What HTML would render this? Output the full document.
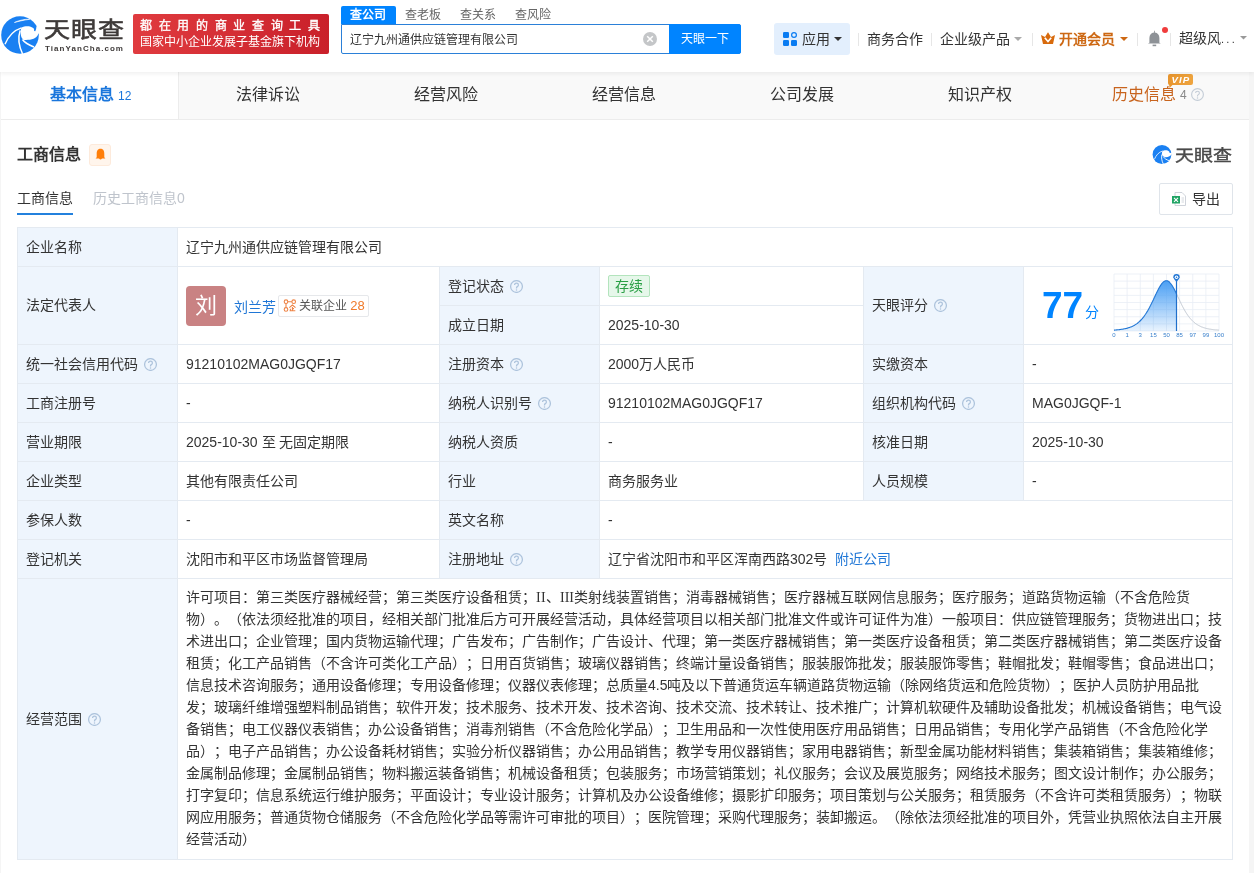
<!DOCTYPE html>
<html lang="zh-CN"><head><meta charset="utf-8">
<style>
*{box-sizing:border-box;margin:0;padding:0}
html,body{width:1254px;height:873px;overflow:hidden}
body{will-change:transform;text-spacing-trim:space-all;background:#f5f5f5;font-family:"Liberation Sans",sans-serif;color:#333;font-size:14px;position:relative}
.abs{position:absolute}
.nw{white-space:nowrap}
#hdr{position:absolute;left:0;top:0;width:1254px;height:72px;background:#fff;z-index:2;box-shadow:0 2px 4px rgba(0,0,0,.06)}
#card{position:absolute;left:1px;top:72px;width:1248px;height:801px;background:#fff}
#tabs{position:absolute;left:0;top:0;width:1248px;height:48px;background:#f9f9f9;border-bottom:1px solid #ececec}
.tab{position:absolute;top:0;height:47px;line-height:46px;text-align:center;font-size:16px;color:#333}
.q{display:inline-block;vertical-align:middle;margin-left:6px;position:relative;top:-1px}
</style></head><body>
<div id="hdr">
  <!-- logo -->
  <svg class="abs" style="left:0px;top:14px" width="42" height="42" viewBox="0 0 42 42">
    <circle cx="20" cy="21" r="18.8" fill="#1a80f2"/>
    <path d="M21.5 13.5 C25 11.8 30.5 11.6 33.6 14.3 C34.2 15.2 34.3 16.2 34.1 17.1 L35.2 17.3 C36 16 36.3 14.5 36.4 12.5 L42 12.5 L42 19.5 L38.5 19.5 C37.5 22.3 35.5 24 33.6 24.8 C31 25.8 27 26.1 24.2 25.9 C22 25.6 20.7 22 20.7 19 C20.7 16.5 21 14.5 21.5 13.5 Z" fill="#fff"/>
    <path d="M5 30.2 C8 23 13 16.5 21.5 13.8" fill="none" stroke="#fff" stroke-width="1.4"/>
    <path d="M20.2 16.5 C18.3 22 18.4 31 22.6 40" fill="none" stroke="#fff" stroke-width="1.5"/>
    <path d="M22.5 25.5 C24.5 28.5 28 30.8 34 33" fill="none" stroke="#fff" stroke-width="1.5"/>
    <path d="M14.4 8.5 C19 6.3 24.5 5 29.8 5.3 C24.5 6 19 7.2 14.4 8.5 Z" fill="#fff" stroke="#fff" stroke-width="0.6"/>
  </svg>
  <div class="abs nw" style="left:44px;top:13px;font-size:26px;line-height:32px;color:#3e3a39;font-weight:500;-webkit-text-stroke:0.7px #3e3a39;letter-spacing:1px;transform:scaleY(0.82);transform-origin:0 20px">天眼查</div>
  <div class="abs nw" style="left:45px;top:44px;font-size:8px;line-height:10px;color:#3e3a39;font-weight:bold;letter-spacing:1.05px">TianYanCha.com</div>
  <!-- red banner -->
  <div class="abs" style="left:133px;top:14px;width:196px;height:40px;background:linear-gradient(90deg,#e03b3f,#c9202a);border-radius:2px"></div>
  <div class="abs nw" style="left:140px;top:18px;font-size:12px;line-height:16px;color:#fff;letter-spacing:6.65px;font-weight:500;-webkit-text-stroke:0.35px #fff">都在用的商业查询工具</div>
  <div class="abs nw" style="left:140px;top:34px;font-size:12px;line-height:16px;color:#fff">国家中小企业发展子基金旗下机构</div>
  <!-- search tabs -->
  <div class="abs" style="left:341px;top:6px;width:55px;height:18px;background:#0084ff;border-radius:2px 2px 0 0"></div>
  <div class="abs nw" style="left:350px;top:6px;font-size:12px;line-height:18px;color:#fff;font-weight:bold">查公司</div>
  <div class="abs nw" style="left:405px;top:6px;font-size:12px;line-height:18px;color:#666">查老板</div>
  <div class="abs nw" style="left:460px;top:6px;font-size:12px;line-height:18px;color:#666">查关系</div>
  <div class="abs nw" style="left:515px;top:6px;font-size:12px;line-height:18px;color:#666">查风险</div>
  <div class="abs" style="left:341px;top:24px;width:400px;height:30px;border:1px solid #2b80d8;border-radius:0 2px 2px 2px;background:#fff"></div>
  <div class="abs nw" style="left:350px;top:31px;font-size:12px;line-height:18px;color:#333">辽宁九州通供应链管理有限公司</div>
  <div class="abs" style="left:643px;top:32px;width:14px;height:14px;border-radius:50%;background:#c4c6c8"></div>
  <svg class="abs" style="left:643px;top:32px" width="14" height="14"><path d="M4.2 4.2 L9.8 9.8 M9.8 4.2 L4.2 9.8" stroke="#fff" stroke-width="1.5"/></svg>
  <div class="abs" style="left:669px;top:24px;width:72px;height:30px;background:#0084ff;border-radius:0 3px 3px 0"></div>
  <div class="abs nw" style="left:681px;top:29px;font-size:12px;line-height:20px;color:#fff">天眼一下</div>
  <!-- right nav -->
  <div class="abs" style="left:774px;top:23px;width:76px;height:32px;background:#e3effd;border-radius:3px"></div>
  <svg class="abs" style="left:783px;top:32px" width="14" height="14" viewBox="0 0 14 14">
    <rect x="0" y="0" width="6" height="6" rx="1.3" fill="#0a7cf2"/>
    <circle cx="11" cy="3" r="2.4" fill="none" stroke="#0a7cf2" stroke-width="1.2"/>
    <rect x="0" y="8" width="6" height="6" rx="1.3" fill="#0a7cf2"/>
    <rect x="8" y="8" width="6" height="6" rx="1.3" fill="#0a7cf2"/>
  </svg>
  <div class="abs nw" style="left:802px;top:29px;font-size:14px;line-height:20px;color:#333">应用</div>
  <svg class="abs" style="left:834px;top:37px" width="8" height="5"><path d="M0 0 L8 0 L4 4 Z" fill="#333"/></svg>
  <div class="abs" style="left:858px;top:33px;width:1px;height:13px;background:#e6e6e6"></div>
  <div class="abs nw" style="left:867px;top:29px;font-size:14px;line-height:20px;color:#333">商务合作</div>
  <div class="abs" style="left:931px;top:33px;width:1px;height:13px;background:#e6e6e6"></div>
  <div class="abs nw" style="left:940px;top:29px;font-size:14px;line-height:20px;color:#333">企业级产品</div>
  <svg class="abs" style="left:1014px;top:37px" width="8" height="5"><path d="M0 0 L8 0 L4 4 Z" fill="#aaa"/></svg>
  <div class="abs" style="left:1032px;top:33px;width:1px;height:13px;background:#e6e6e6"></div>
  <svg class="abs" style="left:1041px;top:32px" width="14" height="12" viewBox="0 0 14 12">
    <path d="M0 3 L4 5 L7 0.3 L10 5 L14 3 L12 12 L2 12 Z" fill="#d86a0c"/>
    <path d="M3.8 5.8 L7 9.5 L10.2 5.8" fill="none" stroke="#fff" stroke-width="1.6"/>
  </svg>
  <div class="abs nw" style="left:1059px;top:29px;font-size:14px;line-height:20px;color:#cd6813;font-weight:bold">开通会员</div>
  <svg class="abs" style="left:1120px;top:37px" width="8" height="5"><path d="M0 0 L8 0 L4 4 Z" fill="#cd6813"/></svg>
  <div class="abs" style="left:1137px;top:33px;width:1px;height:13px;background:#e6e6e6"></div>
  <svg class="abs" style="left:1147px;top:30px" width="15" height="17" viewBox="0 0 15 17">
    <path d="M7 0.8 L7.8 0.8 L7.8 2.5 Q12.2 3 12.4 8 L12.4 12.8 L13.8 13.5 L0.9 13.5 L2.4 12.8 L2.4 8 Q2.6 3 7 2.5 Z" fill="#8e9297"/>
    <rect x="5.6" y="14.6" width="3.6" height="1.6" fill="#8e9297"/>
  </svg>
  <div class="abs" style="left:1162px;top:27px;width:6px;height:6px;border-radius:50%;background:#f03c3c"></div>
  <div class="abs" style="left:1170px;top:33px;width:1px;height:13px;background:#e6e6e6"></div>
  <div class="abs nw" style="left:1179px;top:28px;font-size:14px;line-height:20px;color:#333">超级风<span style="font-size:11px;letter-spacing:2.3px">...</span></div>
  <svg class="abs" style="left:1240px;top:36px" width="7" height="4"><path d="M0 0 L7 0 L3.5 3.5 Z" fill="#999"/></svg>
</div>
<div id="card">
  <div id="tabs">
    <div class="tab" style="left:0;width:178px;padding-left:2px;background:#fff;border-right:1px solid #ececec;height:47px"><b style="color:#1a76dc">基本信息</b> <span style="font-size:12px;color:#1a76dc">12</span></div>
    <div class="tab" style="left:178px;width:178px">法律诉讼</div>
    <div class="tab" style="left:356px;width:178px">经营风险</div>
    <div class="tab" style="left:534px;width:178px">经营信息</div>
    <div class="tab" style="left:712px;width:178px">公司发展</div>
    <div class="tab" style="left:890px;width:178px">知识产权</div>
    <div class="abs nw" style="left:1111px;top:12px;font-size:16px;line-height:22px;color:#c8641e">历史信息</div>
    <div class="abs nw" style="left:1179px;top:13px;font-size:12px;line-height:20px;color:#888">4</div>
    <svg class="abs" style="left:1190px;top:16px" width="13" height="13" viewBox="0 0 13 13"><circle cx="6.5" cy="6.5" r="5.9" fill="none" stroke="#c3ccd6" stroke-width="1.1"/><path d="M4.6 5.1 Q4.6 3.2 6.5 3.2 Q8.4 3.2 8.4 4.9 Q8.4 6 7.3 6.6 Q6.5 7.1 6.5 8.1 L6.5 8.4" fill="none" stroke="#c3ccd6" stroke-width="1.1"/><circle cx="6.5" cy="9.9" r="0.75" fill="#c3ccd6"/></svg>
    <svg class="abs" style="left:1167px;top:2px" width="25" height="14" viewBox="0 0 25 14"><defs><linearGradient id="vg" x1="0" y1="0" x2="1" y2="0"><stop offset="0" stop-color="#e8952e"/><stop offset="1" stop-color="#eea43f"/></linearGradient></defs><path d="M2 0 L23 0 Q25 0 25 2 L25 9 Q25 11 23 11 L4.5 11 L1.5 14 L1.2 11 Q0 10.5 0 9 L0 2 Q0 0 2 0 Z" fill="url(#vg)"/><text x="12.8" y="9" text-anchor="middle" font-family="Liberation Sans" font-size="9.6" font-weight="bold" font-style="italic" letter-spacing="1" fill="#fff">VIP</text></svg>
  </div>
</div>
<!-- section header -->
<div class="abs nw" style="left:17px;top:144px;font-size:16px;line-height:22px;font-weight:bold;color:#333">工商信息</div>
<div class="abs" style="left:89px;top:144px;width:22px;height:22px;background:#fff5ec;border:1px solid #fdeadb;border-radius:3px"></div>
<svg class="abs" style="left:94px;top:148px" width="12" height="14" viewBox="0 0 12 14">
  <path d="M6.5 0.8 C9.4 0.8 10.3 3 10.3 6 L10.3 9.2 L11.4 10.6 L8 10.6 Q6.5 12.4 5 10.6 L1.6 10.6 L2.7 9.2 L2.7 6 C2.7 3 3.6 0.8 6.5 0.8 Z" fill="#ff7f0a"/>
</svg>
<div class="abs nw" style="left:17px;top:187px;font-size:14px;line-height:22px;color:#333">工商信息</div>
<div class="abs" style="left:17px;top:213px;width:56px;height:2px;background:#2381dd"></div>
<div class="abs nw" style="left:93px;top:187px;font-size:14px;line-height:22px;color:#bfc4cc">历史工商信息0</div>
<!-- small logo -->
<svg class="abs" style="left:1152px;top:144px" width="21" height="21" viewBox="0 0 42 42">
  <circle cx="20" cy="21" r="18.8" fill="#1a80f2"/>
  <path d="M21 14.4 C24 11.8 31 11.4 34.3 15.2 L35 17.6 L40 18.6 L40 20 C37.5 23.8 32 26.6 27 26.3 C22.8 26 19.8 23.2 19.8 20 C19.8 17.4 20.3 15.4 21 14.4 Z" fill="#fff"/>
  <path d="M5 30.2 C8 23 13 16.5 21.5 13.8" fill="none" stroke="#fff" stroke-width="1.6"/>
  <path d="M19.6 21 C18.4 27 19.6 34 22.6 40" fill="none" stroke="#fff" stroke-width="1.8"/>
  <path d="M22.3 25.2 C25 29 29 31.8 34 33.2" fill="none" stroke="#fff" stroke-width="1.8"/>
</svg>
<div class="abs nw" style="left:1175px;top:144px;font-size:19px;line-height:24px;color:#4a4a4a;font-weight:500;-webkit-text-stroke:0.5px #4a4a4a;transform:scaleY(0.82);transform-origin:0 14px">天眼查</div>
<!-- export -->
<div class="abs" style="left:1159px;top:183px;width:74px;height:32px;border:1px solid #dfe4ea;border-radius:2px;background:#fff"></div>
<svg class="abs" style="left:1172px;top:192px" width="14" height="14" viewBox="0 0 14 14">
  <path d="M3 0.5 L10 0.5 L13.5 4 L13.5 13.5 L3 13.5 Z" fill="#fff" stroke="#c9ced6" stroke-width="0.9"/>
  <path d="M9.5 6 L12 6 M9.5 8 L12 8 M9.5 10 L12 10" stroke="#c9ced6" stroke-width="0.8"/>
  <rect x="0" y="4" width="8" height="7.5" fill="#21a464"/>
  <path d="M2 5.8 L6 9.8 M6 5.8 L2 9.8" stroke="#fff" stroke-width="1.1"/>
</svg>
<div class="abs nw" style="left:1192px;top:188px;font-size:14px;line-height:22px;color:#333">导出</div>
<div class="abs" style="left:18px;top:228px;width:159px;height:631px;background:#eef5fd"></div>
<div class="abs" style="left:440px;top:267px;width:159px;height:311px;background:#eef5fd"></div>
<div class="abs" style="left:864px;top:267px;width:159px;height:233px;background:#eef5fd"></div>
<div class="abs" style="left:17px;top:227px;width:1216px;height:1px;background:#e4eaf1"></div>
<div class="abs" style="left:17px;top:266px;width:1216px;height:1px;background:#e4eaf1"></div>
<div class="abs" style="left:439px;top:305px;width:425px;height:1px;background:#e4eaf1"></div>
<div class="abs" style="left:17px;top:344px;width:1216px;height:1px;background:#e4eaf1"></div>
<div class="abs" style="left:17px;top:383px;width:1216px;height:1px;background:#e4eaf1"></div>
<div class="abs" style="left:17px;top:422px;width:1216px;height:1px;background:#e4eaf1"></div>
<div class="abs" style="left:17px;top:461px;width:1216px;height:1px;background:#e4eaf1"></div>
<div class="abs" style="left:17px;top:500px;width:1216px;height:1px;background:#e4eaf1"></div>
<div class="abs" style="left:17px;top:539px;width:1216px;height:1px;background:#e4eaf1"></div>
<div class="abs" style="left:17px;top:578px;width:1216px;height:1px;background:#e4eaf1"></div>
<div class="abs" style="left:17px;top:859px;width:1216px;height:1px;background:#e4eaf1"></div>
<div class="abs" style="left:17px;top:227px;width:1px;height:633px;background:#e4eaf1"></div>
<div class="abs" style="left:1232px;top:227px;width:1px;height:633px;background:#e4eaf1"></div>
<div class="abs" style="left:177px;top:227px;width:1px;height:633px;background:#e4eaf1"></div>
<div class="abs" style="left:439px;top:266px;width:1px;height:313px;background:#e4eaf1"></div>
<div class="abs" style="left:599px;top:266px;width:1px;height:313px;background:#e4eaf1"></div>
<div class="abs" style="left:863px;top:266px;width:1px;height:235px;background:#e4eaf1"></div>
<div class="abs" style="left:1023px;top:266px;width:1px;height:235px;background:#e4eaf1"></div>
<div class="abs nw" style="left:26px;top:236px;line-height:22px;">企业名称</div>
<div class="abs nw" style="left:186px;top:236px;line-height:22px;">辽宁九州通供应链管理有限公司</div>
<div class="abs nw" style="left:26px;top:294px;line-height:22px;">法定代表人</div>
<div class="abs nw" style="left:448px;top:275px;line-height:22px;">登记状态<svg class="q" width="13" height="13" viewBox="0 0 13 13"><circle cx="6.5" cy="6.5" r="5.9" fill="none" stroke="#adc3dc" stroke-width="1.25"/><path d="M4.6 5.1 Q4.6 3.2 6.5 3.2 Q8.4 3.2 8.4 4.9 Q8.4 6 7.3 6.6 Q6.5 7.1 6.5 8.1 L6.5 8.4" fill="none" stroke="#adc3dc" stroke-width="1.25"/><circle cx="6.5" cy="9.9" r="0.75" fill="#adc3dc"/></svg></div>
<div class="abs nw" style="left:448px;top:314px;line-height:22px;">成立日期</div>
<div class="abs nw" style="left:608px;top:314px;line-height:22px;">2025-10-30</div>
<div class="abs nw" style="left:872px;top:294px;line-height:22px;">天眼评分<svg class="q" width="13" height="13" viewBox="0 0 13 13"><circle cx="6.5" cy="6.5" r="5.9" fill="none" stroke="#adc3dc" stroke-width="1.25"/><path d="M4.6 5.1 Q4.6 3.2 6.5 3.2 Q8.4 3.2 8.4 4.9 Q8.4 6 7.3 6.6 Q6.5 7.1 6.5 8.1 L6.5 8.4" fill="none" stroke="#adc3dc" stroke-width="1.25"/><circle cx="6.5" cy="9.9" r="0.75" fill="#adc3dc"/></svg></div>
<div class="abs nw" style="left:26px;top:353px;line-height:22px;">统一社会信用代码<svg class="q" width="13" height="13" viewBox="0 0 13 13"><circle cx="6.5" cy="6.5" r="5.9" fill="none" stroke="#adc3dc" stroke-width="1.25"/><path d="M4.6 5.1 Q4.6 3.2 6.5 3.2 Q8.4 3.2 8.4 4.9 Q8.4 6 7.3 6.6 Q6.5 7.1 6.5 8.1 L6.5 8.4" fill="none" stroke="#adc3dc" stroke-width="1.25"/><circle cx="6.5" cy="9.9" r="0.75" fill="#adc3dc"/></svg></div>
<div class="abs nw" style="left:186px;top:353px;line-height:22px;">91210102MAG0JGQF17</div>
<div class="abs nw" style="left:448px;top:353px;line-height:22px;">注册资本<svg class="q" width="13" height="13" viewBox="0 0 13 13"><circle cx="6.5" cy="6.5" r="5.9" fill="none" stroke="#adc3dc" stroke-width="1.25"/><path d="M4.6 5.1 Q4.6 3.2 6.5 3.2 Q8.4 3.2 8.4 4.9 Q8.4 6 7.3 6.6 Q6.5 7.1 6.5 8.1 L6.5 8.4" fill="none" stroke="#adc3dc" stroke-width="1.25"/><circle cx="6.5" cy="9.9" r="0.75" fill="#adc3dc"/></svg></div>
<div class="abs nw" style="left:608px;top:353px;line-height:22px;">2000万人民币</div>
<div class="abs nw" style="left:872px;top:353px;line-height:22px;">实缴资本</div>
<div class="abs nw" style="left:1032px;top:353px;line-height:22px;">-</div>
<div class="abs nw" style="left:26px;top:392px;line-height:22px;">工商注册号</div>
<div class="abs nw" style="left:186px;top:392px;line-height:22px;">-</div>
<div class="abs nw" style="left:448px;top:392px;line-height:22px;">纳税人识别号<svg class="q" width="13" height="13" viewBox="0 0 13 13"><circle cx="6.5" cy="6.5" r="5.9" fill="none" stroke="#adc3dc" stroke-width="1.25"/><path d="M4.6 5.1 Q4.6 3.2 6.5 3.2 Q8.4 3.2 8.4 4.9 Q8.4 6 7.3 6.6 Q6.5 7.1 6.5 8.1 L6.5 8.4" fill="none" stroke="#adc3dc" stroke-width="1.25"/><circle cx="6.5" cy="9.9" r="0.75" fill="#adc3dc"/></svg></div>
<div class="abs nw" style="left:608px;top:392px;line-height:22px;">91210102MAG0JGQF17</div>
<div class="abs nw" style="left:872px;top:392px;line-height:22px;">组织机构代码<svg class="q" width="13" height="13" viewBox="0 0 13 13"><circle cx="6.5" cy="6.5" r="5.9" fill="none" stroke="#adc3dc" stroke-width="1.25"/><path d="M4.6 5.1 Q4.6 3.2 6.5 3.2 Q8.4 3.2 8.4 4.9 Q8.4 6 7.3 6.6 Q6.5 7.1 6.5 8.1 L6.5 8.4" fill="none" stroke="#adc3dc" stroke-width="1.25"/><circle cx="6.5" cy="9.9" r="0.75" fill="#adc3dc"/></svg></div>
<div class="abs nw" style="left:1032px;top:392px;line-height:22px;">MAG0JGQF-1</div>
<div class="abs nw" style="left:26px;top:431px;line-height:22px;">营业期限</div>
<div class="abs nw" style="left:186px;top:431px;line-height:22px;">2025-10-30 至 无固定期限</div>
<div class="abs nw" style="left:448px;top:431px;line-height:22px;">纳税人资质</div>
<div class="abs nw" style="left:608px;top:431px;line-height:22px;">-</div>
<div class="abs nw" style="left:872px;top:431px;line-height:22px;">核准日期</div>
<div class="abs nw" style="left:1032px;top:431px;line-height:22px;">2025-10-30</div>
<div class="abs nw" style="left:26px;top:470px;line-height:22px;">企业类型</div>
<div class="abs nw" style="left:186px;top:470px;line-height:22px;">其他有限责任公司</div>
<div class="abs nw" style="left:448px;top:470px;line-height:22px;">行业</div>
<div class="abs nw" style="left:608px;top:470px;line-height:22px;">商务服务业</div>
<div class="abs nw" style="left:872px;top:470px;line-height:22px;">人员规模</div>
<div class="abs nw" style="left:1032px;top:470px;line-height:22px;">-</div>
<div class="abs nw" style="left:26px;top:509px;line-height:22px;">参保人数</div>
<div class="abs nw" style="left:186px;top:509px;line-height:22px;">-</div>
<div class="abs nw" style="left:448px;top:509px;line-height:22px;">英文名称</div>
<div class="abs nw" style="left:608px;top:509px;line-height:22px;">-</div>
<div class="abs nw" style="left:26px;top:548px;line-height:22px;">登记机关</div>
<div class="abs nw" style="left:186px;top:548px;line-height:22px;">沈阳市和平区市场监督管理局</div>
<div class="abs nw" style="left:448px;top:548px;line-height:22px;">注册地址<svg class="q" width="13" height="13" viewBox="0 0 13 13"><circle cx="6.5" cy="6.5" r="5.9" fill="none" stroke="#adc3dc" stroke-width="1.25"/><path d="M4.6 5.1 Q4.6 3.2 6.5 3.2 Q8.4 3.2 8.4 4.9 Q8.4 6 7.3 6.6 Q6.5 7.1 6.5 8.1 L6.5 8.4" fill="none" stroke="#adc3dc" stroke-width="1.25"/><circle cx="6.5" cy="9.9" r="0.75" fill="#adc3dc"/></svg></div>
<div class="abs nw" style="left:608px;top:548px;line-height:22px;">辽宁省沈阳市和平区浑南西路302号 <span style="color:#1f76d6;margin-left:4px">附近公司</span></div>
<div class="abs nw" style="left:26px;top:708px;line-height:22px;">经营范围<svg class="q" width="13" height="13" viewBox="0 0 13 13"><circle cx="6.5" cy="6.5" r="5.9" fill="none" stroke="#adc3dc" stroke-width="1.25"/><path d="M4.6 5.1 Q4.6 3.2 6.5 3.2 Q8.4 3.2 8.4 4.9 Q8.4 6 7.3 6.6 Q6.5 7.1 6.5 8.1 L6.5 8.4" fill="none" stroke="#adc3dc" stroke-width="1.25"/><circle cx="6.5" cy="9.9" r="0.75" fill="#adc3dc"/></svg></div>
<div class="abs nw" style="left:186px;top:586px;line-height:22px;">许可项目：第三类医疗器械经营；第三类医疗设备租赁；<span style="font-family:'Liberation Serif';letter-spacing:0.35px">II</span>、<span style="font-family:'Liberation Serif'">III</span>类射线装置销售；消毒器械销售；医疗器械互联网信息服务；医疗服务；道路货物运输（不含危险货</div>
<div class="abs nw" style="left:186px;top:608px;line-height:22px;">物）。（依法须经批准的项目，经相关部门批准后方可开展经营活动，具体经营项目以相关部门批准文件或许可证件为准）一般项目：供应链管理服务；货物进出口；技</div>
<div class="abs nw" style="left:186px;top:630px;line-height:22px;">术进出口；企业管理；国内货物运输代理；广告发布；广告制作；广告设计、代理；第一类医疗器械销售；第一类医疗设备租赁；第二类医疗器械销售；第二类医疗设备</div>
<div class="abs nw" style="left:186px;top:652px;line-height:22px;">租赁；化工产品销售（不含许可类化工产品）；日用百货销售；玻璃仪器销售；终端计量设备销售；服装服饰批发；服装服饰零售；鞋帽批发；鞋帽零售；食品进出口；</div>
<div class="abs nw" style="left:186px;top:674px;line-height:22px;">信息技术咨询服务；通用设备修理；专用设备修理；仪器仪表修理；总质量4.5吨及以下普通货运车辆道路货物运输（除网络货运和危险货物）；医护人员防护用品批</div>
<div class="abs nw" style="left:186px;top:696px;line-height:22px;">发；玻璃纤维增强塑料制品销售；软件开发；技术服务、技术开发、技术咨询、技术交流、技术转让、技术推广；计算机软硬件及辅助设备批发；机械设备销售；电气设</div>
<div class="abs nw" style="left:186px;top:718px;line-height:22px;">备销售；电工仪器仪表销售；办公设备销售；消毒剂销售（不含危险化学品）；卫生用品和一次性使用医疗用品销售；日用品销售；专用化学产品销售（不含危险化学</div>
<div class="abs nw" style="left:186px;top:740px;line-height:22px;">品）；电子产品销售；办公设备耗材销售；实验分析仪器销售；办公用品销售；教学专用仪器销售；家用电器销售；新型金属功能材料销售；集装箱销售；集装箱维修；</div>
<div class="abs nw" style="left:186px;top:762px;line-height:22px;">金属制品修理；金属制品销售；物料搬运装备销售；机械设备租赁；包装服务；市场营销策划；礼仪服务；会议及展览服务；网络技术服务；图文设计制作；办公服务；</div>
<div class="abs nw" style="left:186px;top:784px;line-height:22px;">打字复印；信息系统运行维护服务；平面设计；专业设计服务；计算机及办公设备维修；摄影扩印服务；项目策划与公关服务；租赁服务（不含许可类租赁服务）；物联</div>
<div class="abs nw" style="left:186px;top:806px;line-height:22px;">网应用服务；普通货物仓储服务（不含危险化学品等需许可审批的项目）；医院管理；采购代理服务；装卸搬运。（除依法须经批准的项目外，凭营业执照依法自主开展</div>
<div class="abs nw" style="left:186px;top:828px;line-height:22px;">经营活动）</div>
<div class="abs" style="left:186px;top:286px;width:40px;height:40px;border-radius:4px;background:#c98283"></div>
<div class="abs nw" style="left:186px;top:290px;width:40px;text-align:center;font-size:22px;line-height:32px;color:#fff">刘</div>
<div class="abs nw" style="left:234px;top:296px;line-height:22px;"><span style="color:#1f76d6">刘兰芳</span></div>
<div class="abs" style="left:278px;top:295px;width:91px;height:22px;border:1px solid #e6e8eb;border-radius:2px;background:#fff"></div>
<svg class="abs" style="left:283px;top:299px" width="14" height="14" viewBox="0 0 14 14"><g fill="none" stroke="#ee8446" stroke-width="1.1"><circle cx="3" cy="2.7" r="1.8"/><circle cx="10.7" cy="2.7" r="1.8"/><circle cx="3" cy="10.4" r="1.8"/><path d="M4.8 2.7 L8.9 2.7 M3 4.5 L3 8.6"/><path d="M6.3 8.6 L9.4 6 L12.5 8.6 M6.6 11.8 L12.3 11.8 M9.4 8 L9.4 11.8 M9.4 9.6 L11 9.6 M7.4 9.8 L7.4 11.8"/></g></svg>
<div class="abs nw" style="left:299px;top:295px;font-size:12px;line-height:22px;color:#555">关联企业 <span style="color:#f07a2a;font-size:13px">28</span></div>
<div class="abs" style="left:608px;top:275px;width:42px;height:22px;border:1px solid #b3e4bd;border-radius:2px;background:#e6f7ea"></div>
<div class="abs nw" style="left:615px;top:275px;font-size:14px;line-height:22px;color:#2a9f45">存续</div>
<div class="abs nw" style="left:1042px;top:285px;font-size:37px;line-height:42px;color:#0084ff;font-weight:bold">77</div>
<div class="abs nw" style="left:1085px;top:301px;font-size:14px;line-height:22px;color:#0084ff">分</div>
<svg class="abs" style="left:1114px;top:274px;overflow:visible" width="105" height="57" viewBox="0 0 105 57"><defs><linearGradient id="gf" x1="0" y1="0" x2="0" y2="1"><stop offset="0" stop-color="#4a9ff4"/><stop offset="1" stop-color="#4a9ff4" stop-opacity="0.12"/></linearGradient></defs><path d="M0.0 0 L0.0 57" stroke="#e9eef5" stroke-width="0.8"/><path d="M13.12 0 L13.12 57" stroke="#e9eef5" stroke-width="0.8"/><path d="M26.25 0 L26.25 57" stroke="#e9eef5" stroke-width="0.8"/><path d="M39.38 0 L39.38 57" stroke="#e9eef5" stroke-width="0.8"/><path d="M52.5 0 L52.5 57" stroke="#e9eef5" stroke-width="0.8"/><path d="M65.62 0 L65.62 57" stroke="#e9eef5" stroke-width="0.8"/><path d="M78.75 0 L78.75 57" stroke="#e9eef5" stroke-width="0.8"/><path d="M91.88 0 L91.88 57" stroke="#e9eef5" stroke-width="0.8"/><path d="M105.0 0 L105.0 57" stroke="#e9eef5" stroke-width="0.8"/><path d="M0 0.0 L105 0.0" stroke="#e9eef5" stroke-width="0.8"/><path d="M0 7.12 L105 7.12" stroke="#e9eef5" stroke-width="0.8"/><path d="M0 14.25 L105 14.25" stroke="#e9eef5" stroke-width="0.8"/><path d="M0 21.38 L105 21.38" stroke="#e9eef5" stroke-width="0.8"/><path d="M0 28.5 L105 28.5" stroke="#e9eef5" stroke-width="0.8"/><path d="M0 35.62 L105 35.62" stroke="#e9eef5" stroke-width="0.8"/><path d="M0 42.75 L105 42.75" stroke="#e9eef5" stroke-width="0.8"/><path d="M0 49.88 L105 49.88" stroke="#e9eef5" stroke-width="0.8"/><path d="M0 57.0 L105 57.0" stroke="#e9eef5" stroke-width="0.8"/><path d="M0.0 56.1 L0.5 56.1 L1.0 56.0 L1.5 56.0 L2.0 56.0 L2.5 55.9 L3.0 55.9 L3.5 55.8 L4.0 55.8 L4.5 55.7 L5.0 55.7 L5.5 55.6 L6.0 55.5 L6.5 55.5 L7.0 55.4 L7.5 55.3 L8.0 55.3 L8.5 55.2 L9.0 55.1 L9.5 55.0 L10.0 54.9 L10.5 54.8 L11.0 54.7 L11.5 54.6 L12.0 54.5 L12.5 54.4 L13.0 54.2 L13.5 54.1 L14.0 53.9 L14.5 53.8 L15.0 53.6 L15.5 53.5 L16.0 53.3 L16.5 53.1 L17.0 52.9 L17.5 52.7 L18.0 52.5 L18.5 52.2 L19.0 52.0 L19.5 51.7 L20.0 51.5 L20.5 51.2 L21.0 50.9 L21.5 50.6 L22.0 50.3 L22.5 49.9 L23.0 49.6 L23.5 49.2 L24.0 48.8 L24.5 48.4 L25.0 47.9 L25.5 47.5 L26.0 47.0 L26.5 46.5 L27.0 46.0 L27.5 45.5 L28.0 44.9 L28.5 44.3 L29.0 43.7 L29.5 43.1 L30.0 42.4 L30.5 41.7 L31.0 41.0 L31.5 40.3 L32.0 39.5 L32.5 38.7 L33.0 37.9 L33.5 37.1 L34.0 36.2 L34.5 35.3 L35.0 34.4 L35.5 33.5 L36.0 32.5 L36.5 31.6 L37.0 30.6 L37.5 29.6 L38.0 28.5 L38.5 27.5 L39.0 26.4 L39.5 25.4 L40.0 24.3 L40.5 23.3 L41.0 22.2 L41.5 21.1 L42.0 20.1 L42.5 19.0 L43.0 18.0 L43.5 17.0 L44.0 16.0 L44.5 15.0 L45.0 14.1 L45.5 13.2 L46.0 12.4 L46.5 11.6 L47.0 10.8 L47.5 10.1 L48.0 9.4 L48.5 8.9 L49.0 8.3 L49.5 7.9 L50.0 7.5 L50.5 7.2 L51.0 7.0 L51.5 6.8 L52.0 6.7 L52.5 6.7 L53.0 6.8 L53.5 6.9 L54.0 7.1 L54.5 7.4 L55.0 7.8 L55.5 8.2 L56.0 8.8 L56.5 9.3 L57.0 10.0 L57.5 10.7 L58.0 11.4 L58.5 12.2 L59.0 13.0 L59.5 13.9 L60.0 14.8 L60.5 15.8 L61.0 16.8 L61.5 17.8 L62.0 18.8 L62.5 19.9 L62.5 19.9 L62.5 57 L0 57 Z" fill="url(#gf)"/><path d="M0.0 56.1 L0.5 56.1 L1.0 56.0 L1.5 56.0 L2.0 56.0 L2.5 55.9 L3.0 55.9 L3.5 55.8 L4.0 55.8 L4.5 55.7 L5.0 55.7 L5.5 55.6 L6.0 55.5 L6.5 55.5 L7.0 55.4 L7.5 55.3 L8.0 55.3 L8.5 55.2 L9.0 55.1 L9.5 55.0 L10.0 54.9 L10.5 54.8 L11.0 54.7 L11.5 54.6 L12.0 54.5 L12.5 54.4 L13.0 54.2 L13.5 54.1 L14.0 53.9 L14.5 53.8 L15.0 53.6 L15.5 53.5 L16.0 53.3 L16.5 53.1 L17.0 52.9 L17.5 52.7 L18.0 52.5 L18.5 52.2 L19.0 52.0 L19.5 51.7 L20.0 51.5 L20.5 51.2 L21.0 50.9 L21.5 50.6 L22.0 50.3 L22.5 49.9 L23.0 49.6 L23.5 49.2 L24.0 48.8 L24.5 48.4 L25.0 47.9 L25.5 47.5 L26.0 47.0 L26.5 46.5 L27.0 46.0 L27.5 45.5 L28.0 44.9 L28.5 44.3 L29.0 43.7 L29.5 43.1 L30.0 42.4 L30.5 41.7 L31.0 41.0 L31.5 40.3 L32.0 39.5 L32.5 38.7 L33.0 37.9 L33.5 37.1 L34.0 36.2 L34.5 35.3 L35.0 34.4 L35.5 33.5 L36.0 32.5 L36.5 31.6 L37.0 30.6 L37.5 29.6 L38.0 28.5 L38.5 27.5 L39.0 26.4 L39.5 25.4 L40.0 24.3 L40.5 23.3 L41.0 22.2 L41.5 21.1 L42.0 20.1 L42.5 19.0 L43.0 18.0 L43.5 17.0 L44.0 16.0 L44.5 15.0 L45.0 14.1 L45.5 13.2 L46.0 12.4 L46.5 11.6 L47.0 10.8 L47.5 10.1 L48.0 9.4 L48.5 8.9 L49.0 8.3 L49.5 7.9 L50.0 7.5 L50.5 7.2 L51.0 7.0 L51.5 6.8 L52.0 6.7 L52.5 6.7 L53.0 6.8 L53.5 6.9 L54.0 7.1 L54.5 7.4 L55.0 7.8 L55.5 8.2 L56.0 8.8 L56.5 9.3 L57.0 10.0 L57.5 10.7 L58.0 11.4 L58.5 12.2 L59.0 13.0 L59.5 13.9 L60.0 14.8 L60.5 15.8 L61.0 16.8 L61.5 17.8 L62.0 18.8 L62.5 19.9 L62.5 19.9" fill="none" stroke="#2176d4" stroke-width="1.1"/><path d="M62.5 19.9 L63.0 20.9 L63.5 22.0 L64.0 23.0 L64.5 24.1 L65.0 25.2 L65.5 26.2 L66.0 27.3 L66.5 28.3 L67.0 29.4 L67.5 30.4 L68.0 31.4 L68.5 32.4 L69.0 33.3 L69.5 34.2 L70.0 35.2 L70.5 36.1 L71.0 36.9 L71.5 37.8 L72.0 38.6 L72.5 39.4 L73.0 40.1 L73.5 40.9 L74.0 41.6 L74.5 42.3 L75.0 42.9 L75.5 43.6 L76.0 44.2 L76.5 44.8 L77.0 45.3 L77.5 45.9 L78.0 46.4 L78.5 46.9 L79.0 47.4 L79.5 47.8 L80.0 48.3 L80.5 48.7 L81.0 49.1 L81.5 49.5 L82.0 49.8 L82.5 50.2 L83.0 50.5 L83.5 50.8 L84.0 51.1 L84.5 51.4 L85.0 51.7 L85.5 51.9 L86.0 52.2 L86.5 52.4 L87.0 52.6 L87.5 52.9 L88.0 53.1 L88.5 53.2 L89.0 53.4 L89.5 53.6 L90.0 53.8 L90.5 53.9 L91.0 54.1 L91.5 54.2 L92.0 54.3 L92.5 54.5 L93.0 54.6 L93.5 54.7 L94.0 54.8 L94.5 54.9 L95.0 55.0 L95.5 55.1 L96.0 55.2 L96.5 55.2 L97.0 55.3 L97.5 55.4 L98.0 55.5 L98.5 55.5 L99.0 55.6 L99.5 55.7 L100.0 55.7 L100.5 55.8 L101.0 55.8 L101.5 55.9 L102.0 55.9 L102.5 55.9 L103.0 56.0 L103.5 56.0 L104.0 56.1 L104.5 56.1 L105.0 56.1" fill="none" stroke="#c2c9d2" stroke-width="1"/><path d="M62.5 4 L62.5 57" stroke="#1f6fcb" stroke-width="1.2"/><path d="M59.3 3.3 A3.2 3.2 0 1 1 65.7 3.3 Q65.5 5 62.5 8 Q59.5 5 59.3 3.3 Z" fill="#2176d4"/><circle cx="62.5" cy="3.3" r="1.8" fill="#fff"/><circle cx="62.5" cy="3.3" r="0.8" fill="#2176d4"/></svg>
<div class="abs nw" style="left:1104.0px;top:332px;width:20px;text-align:center;font-size:6px;line-height:7px;color:#3a80cc">0</div>
<div class="abs nw" style="left:1117.1px;top:332px;width:20px;text-align:center;font-size:6px;line-height:7px;color:#3a80cc">1</div>
<div class="abs nw" style="left:1130.2px;top:332px;width:20px;text-align:center;font-size:6px;line-height:7px;color:#3a80cc">3</div>
<div class="abs nw" style="left:1143.4px;top:332px;width:20px;text-align:center;font-size:6px;line-height:7px;color:#3a80cc">15</div>
<div class="abs nw" style="left:1156.5px;top:332px;width:20px;text-align:center;font-size:6px;line-height:7px;color:#3a80cc">50</div>
<div class="abs nw" style="left:1169.6px;top:332px;width:20px;text-align:center;font-size:6px;line-height:7px;color:#3a80cc">85</div>
<div class="abs nw" style="left:1182.8px;top:332px;width:20px;text-align:center;font-size:6px;line-height:7px;color:#3a80cc">97</div>
<div class="abs nw" style="left:1195.9px;top:332px;width:20px;text-align:center;font-size:6px;line-height:7px;color:#3a80cc">99</div>
<div class="abs nw" style="left:1209.0px;top:332px;width:20px;text-align:center;font-size:6px;line-height:7px;color:#3a80cc">100</div>
</body></html>
